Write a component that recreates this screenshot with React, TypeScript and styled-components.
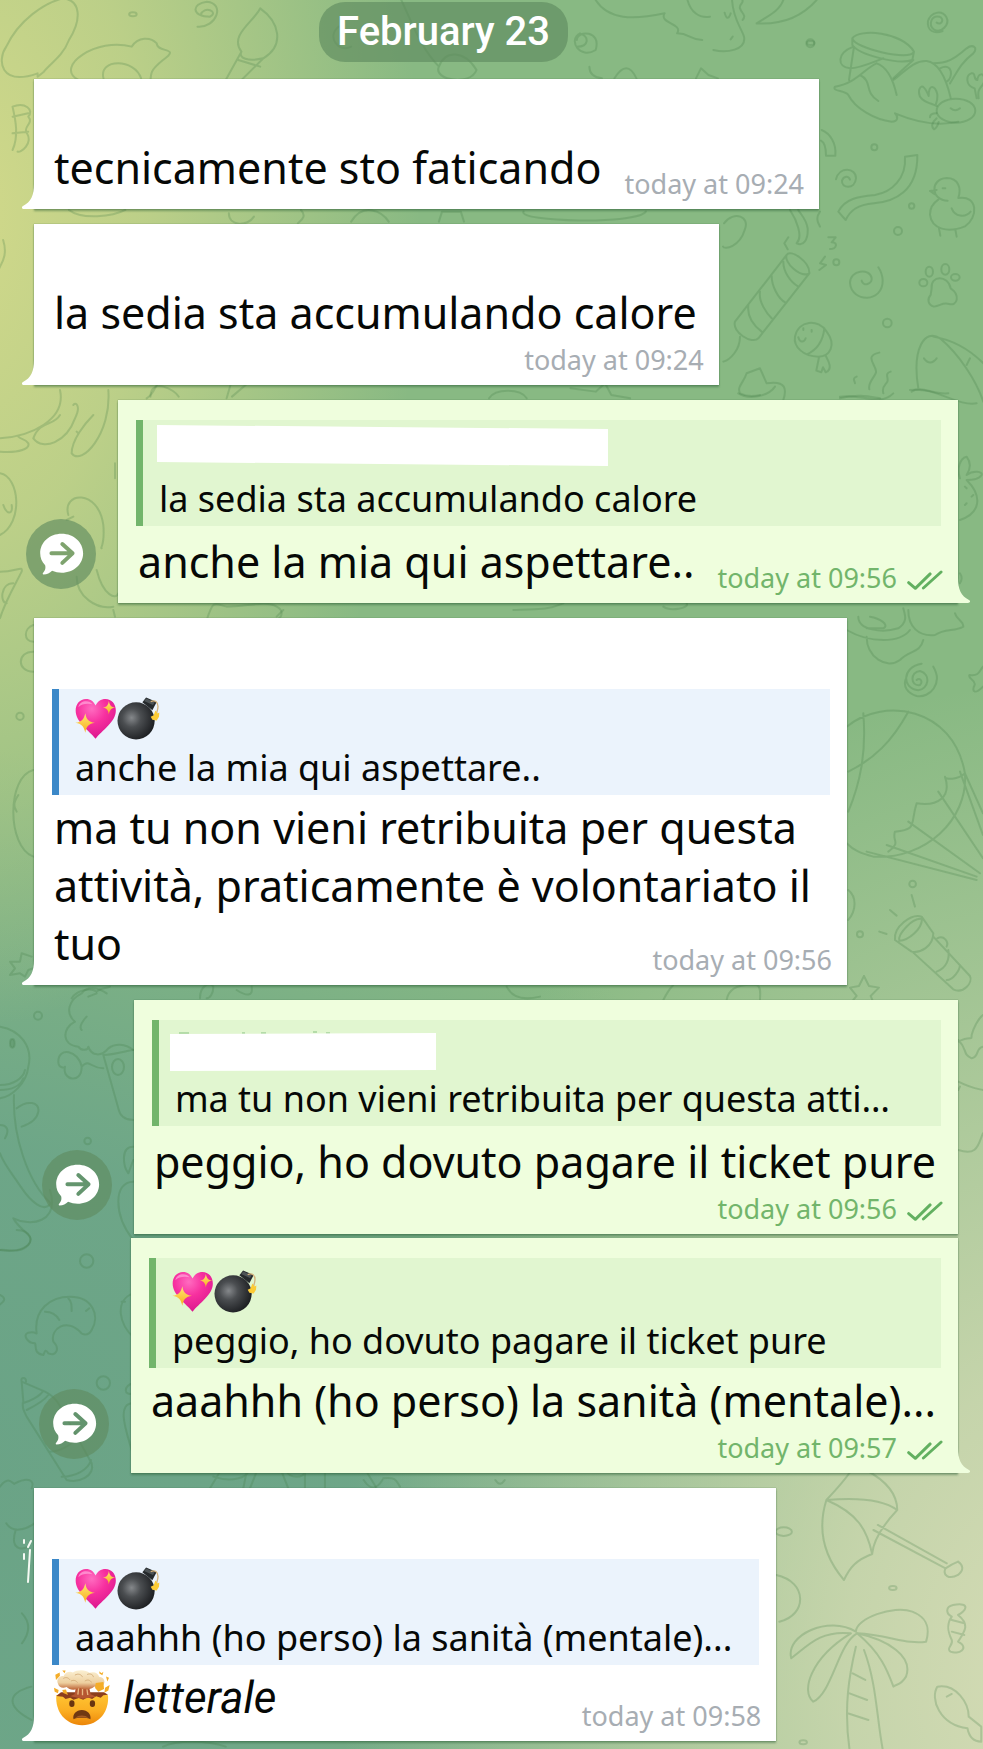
import React from "react";
import styled, { createGlobalStyle, css } from "styled-components";

type Side = "in" | "out";

const GlobalStyle = createGlobalStyle`
  *, *::before, *::after { box-sizing: border-box; }
  body { margin: 0; background: #88b984; }
`;

const Chat = styled.main`
  position: relative;
  isolation: isolate;
  display: flex;
  flex-direction: column;
  min-height: 100vh;
  padding: 2px 0 8px;
  overflow: hidden;
  font-family: "Noto Sans", "Open Sans", sans-serif;
  color: #060806;
  background:
    radial-gradient(ellipse 460px 820px at -4% 12%, #d2d98a 0%, rgba(205, 215, 138, 0.75) 40%, rgba(170, 200, 134, 0) 100%),
    radial-gradient(ellipse 720px 1000px at 108% 96%, #d6dcb6 0%, rgba(208, 217, 178, 0.85) 30%, rgba(170, 200, 150, 0) 100%),
    radial-gradient(ellipse 900px 720px at -6% 84%, #6aa386 0%, rgba(108, 165, 136, 0.95) 45%, rgba(128, 178, 136, 0) 100%),
    #88b983;
`;

const Wallpaper = styled.svg`
  position: absolute;
  inset: 0;
  z-index: -1;
  width: 100%;
  height: 100%;
  fill: none;
  stroke: rgba(62, 122, 66, 0.24);
  stroke-width: 2;
  stroke-linecap: round;
  stroke-linejoin: round;

  path, circle, ellipse { vector-effect: non-scaling-stroke; }
`;

const DayBadge = styled.time`
  align-self: center;
  margin: 0 96px 17px 0;
  padding: 0 18px;
  border-radius: 26px;
  background: rgba(96, 139, 96, 0.66);
  color: #fff;
  font: 500 40px/60px Roboto, sans-serif;
`;

const Messages = styled.ol`
  display: flex;
  flex-direction: column;
  gap: 15px;
  margin: 0;
  padding: 0;
  list-style: none;
`;

const Row = styled.li<{ $side: Side; $grouped?: boolean }>`
  display: flex;
  align-items: flex-end;
  gap: 22px;
  ${({ $side }) =>
    $side === "in"
      ? css`justify-content: flex-start; padding: 0 136px 0 34px;`
      : css`justify-content: flex-end; padding: 0 25px 0 0;`}
  ${({ $grouped }) => $grouped && css`margin-top: -11px;`}
`;

const Bubble = styled.article<{ $side: Side }>`
  position: relative;
  display: flex;
  flex-direction: column;
  min-width: 0;
  padding: 0 17px 9px 18px;
  background: ${({ $side }) => ($side === "in" ? "#fff" : "#effedd")};
  box-shadow: 0 0 1px rgba(40, 90, 50, 0.6), 0 2px 2px rgba(40, 90, 50, 0.45);
`;

const Tail = styled.svg<{ $side: Side }>`
  position: absolute;
  bottom: 0;
  width: 14px;
  height: 30px;
  ${({ $side }) =>
    $side === "in"
      ? css`left: -12px; fill: #fff;`
      : css`right: -12px; fill: #effedd; transform: scaleX(-1);`}
`;

const SenderSpace = styled.div`
  height: 58px;
`;

const Quote = styled.blockquote<{ $side: Side; $tall?: boolean; $snug?: boolean }>`
  margin: 0;
  padding: 0 27px 5px 16px;
  border-left: 7px solid ${({ $side }) => ($side === "in" ? "#3b88c8" : "#72b56b")};
  background: ${({ $side }) => ($side === "in" ? "#ebf3fc" : "#e1f6d0")};
  margin-top: ${({ $side }) => ($side === "in" ? 13 : 20)}px;
  margin-bottom: ${({ $snug }) => ($snug ? 2 : 5)}px;
  ${({ $tall }) => $tall && css`padding-top: 4px;`}
`;

const Author = styled.div`
  display: flex;
  align-items: flex-start;
  height: 57px;
`;

const Emojis = styled.svg`
  width: 85px;
  height: 43px;
  margin-top: 8px;
`;

const Cover = styled.svg`
  height: 55px;
  margin-left: -16px;
  overflow: visible;
`;

const QuoteText = styled.p`
  margin: 0;
  font-size: 36px;
  line-height: 44px;
  white-space: nowrap;
`;

const Content = styled.div<{ $stacked?: boolean }>`
  display: flex;
  justify-content: space-between;
  align-items: flex-end;
  column-gap: 18px;
  ${({ $stacked }) => $stacked && css`flex-direction: column; row-gap: 2px;`}
`;

const Body = styled.p<{ $stacked?: boolean }>`
  align-self: ${({ $stacked }) => ($stacked ? "flex-start" : "auto")};
  margin: 2px 5px ${({ $stacked }) => ($stacked ? 0 : 3)}px 2px;
  font-size: 43px;
  line-height: 58px;
`;

const LongBody = styled(Body)`
  margin-right: -180px;
`;

const EmojiBody = styled(Body)`
  display: flex;
  align-items: center;
  gap: 12px;
  padding-bottom: 2px;
`;

const MindBlown = styled.svg`
  width: 57px;
  height: 56px;
`;

const Slanted = styled.em`
  font-family: Roboto, sans-serif;
  font-size: 44px;
  line-height: 58px;
`;

const Meta = styled.footer<{ $side: Side }>`
  display: flex;
  align-items: center;
  gap: 10px;
  flex-shrink: 0;
  margin-right: -2px;
  color: ${({ $side }) => ($side === "in" ? "#a7adb3" : "#72b56b")};
  font-size: 27px;
  line-height: 32px;
  white-space: nowrap;
`;

const Checks = styled.svg`
  width: 36px;
  height: 22px;
  margin-top: 4px;
  fill: none;
  stroke: #62b060;
  stroke-width: 9;
  stroke-linecap: round;
  stroke-linejoin: round;
`;

const ForwardButton = styled.button`
  flex-shrink: 0;
  width: 70px;
  height: 70px;
  margin: 0 0 14px;
  padding: 0;
  border: 0;
  border-radius: 50%;
  background: rgba(96, 139, 96, 0.64);
`;

const ForwardGlyph = styled.svg`
  display: block;
  width: 70px;
  height: 70px;
`;

function HeartAndBomb() {
  return (
    <Emojis viewBox="228 262 256 128" role="img" aria-label="💖💣">
      <defs>
        <radialGradient id="heart" cx="40%" cy="25%" r="80%">
          <stop offset="0" stopColor="#ff6cc0" />
          <stop offset=".45" stopColor="#f7309f" />
          <stop offset="1" stopColor="#d8148c" />
        </radialGradient>
        <radialGradient id="ball" cx="38%" cy="42%" r="62%">
          <stop offset="0" stopColor="#85888b" />
          <stop offset=".4" stopColor="#4b4e51" />
          <stop offset="1" stopColor="#1e2023" />
        </radialGradient>
        <linearGradient id="spark" x1="0" y1="0" x2="0" y2="1">
          <stop offset="0" stopColor="#ffe873" />
          <stop offset="1" stopColor="#f8ad1c" />
        </linearGradient>
      </defs>
      <path d="M290 387C270 362 230 337 230 302c0-20 13-35 31-35 14 0 24 8 29 20 5-12 16-20 30-20 18 0 31 15 31 35 0 35-42 60-61 85z" fill="url(#heart)" />
      <path d="M238 292c3-12 12-18 23-18 8 0 15 4 20 9-14-3-31-3-43 9z" fill="#ff9bd6" opacity=".8" />
      <path d="M259 310c3 18 10 26 29 29-19 3-26 11-29 30-4-19-11-27-30-30 19-3 26-11 30-29z" fill="url(#spark)" />
      <path d="M330 273c2 13 7 18 19 20-12 2-17 7-19 21-2-14-7-19-18-21 11-2 16-7 18-20z" fill="url(#spark)" />
      <path d="M431 277l11-14 32 13-13 25z" fill="#25292c" />
      <path d="M436 273l7-7 25 11-5 8z" fill="#4d5356" />
      <circle cx="412" cy="333" r="56" fill="url(#ball)" />
      <path d="M456 275c14-6 22 2 22 15 0 8-3 15-5 22" fill="none" stroke="#d4b27c" strokeWidth="4" />
      <path d="M470 302l7 9 5-3-1 13-7 11-13-2-5-9 9-5z" fill="#fccb36" />
    </Emojis>
  );
}

function ExplodingHead() {
  return (
    <MindBlown viewBox="165 452 172 168" role="img" aria-label="🤯">
      <defs>
        <linearGradient id="face" x1="0" y1="0" x2="0" y2="1">
          <stop offset="0" stopColor="#ffc634" />
          <stop offset=".55" stopColor="#fbae22" />
          <stop offset="1" stopColor="#ec8609" />
        </linearGradient>
        <linearGradient id="cloud" x1="0" y1="0" x2="0" y2="1">
          <stop offset="0" stopColor="#fbf0d2" />
          <stop offset=".65" stopColor="#edcf9f" />
          <stop offset="1" stopColor="#bd6335" />
        </linearGradient>
      </defs>
      <path d="M172 528c-4 48 26 90 78 90s82-42 78-90c-22-8-132-8-156 0z" fill="url(#face)" />
      <path d="M172 530l20 2 8 7 14-4 10 6 16-5 13 5 13-7 14 5 12-8 14 4 8-7 14-2-12-7H186z" fill="#8c3e1c" />
      <path d="M233 496h36l7 29 16 7-40 6-38-7 13-6z" fill="#b65731" />
      <path d="M240 500l-3 26m14-26v28m12-28l4 27" stroke="#e9b983" strokeWidth="4" />
      <path d="M177 493c-7-15 7-24 17-23 4-12 19-16 28-11 13-9 39-9 50 1 15-5 27 2 29 12 13 1 21 13 13 24-8 10-20 7-27 5-15 13-36 10-44 4-14 9-32 7-40-2-12 5-23 1-26-10z" fill="url(#cloud)" />
      <path d="M193 477c8-5 16-2 20 4m15-14c10-6 20-2 23 6m14-8c9-4 18 0 19 8m-68 12c8-5 17-1 20 5m22-5c8-6 17-3 20 4" fill="none" stroke="#d6b07e" strokeWidth="3" />
      <g fill="#f4ad28">
        <path d="M169 466l13-7 1 10-12 13zM190 453l10 0-3 8zM302 455l6 6 6-4-3 10-9-5zM165 505l14 7-2 10-10-5zM322 471l9 4-5 11zM291 491l23-3 2 21-17 8-10-11zM319 505l14-8-4 16-12 7z" />
        <path d="M190 512l11-2 6 17-14-6z" />
      </g>
      <ellipse cx="219" cy="553" rx="8" ry="10" fill="#6a3510" />
      <ellipse cx="281" cy="553" rx="8" ry="10" fill="#6a3510" />
      <path d="M224 600c-4-15 8-28 25-28s29 13 26 28c-10-5-40-6-51 0z" fill="#713812" />
      <path d="M230 596c6-10 32-10 38 0-10-3-28-3-38 0z" fill="#a65b25" />
    </MindBlown>
  );
}

function Forward() {
  return (
    <ForwardButton type="button" aria-label="Forward">
      <ForwardGlyph viewBox="70 387 212 212" fill="#fff" aria-hidden="true">
        <mask id="arrow">
          <path d="M60 380h230v230H60z" />
          <path d="M147 491h62M180 463l31 28-31 29" fill="none" stroke="#000" strokeWidth="12" strokeLinecap="round" strokeLinejoin="round" />
        </mask>
        <g mask="url(#arrow)">
          <path d="M178 432c37 0 65 26 65 59s-28 59-65 59c-10 0-20-2-29-6-7 7-15 11-26 11-3 0-3-3-1-5 7-8 8-16 6-23-10-10-15-22-15-36 0-33 28-59 65-59z" />
        </g>
      </ForwardGlyph>
    </ForwardButton>
  );
}

function BubbleTail({ side }: { side: Side }) {
  return (
    <Tail $side={side} viewBox="0 0 14 30" aria-hidden="true">
      <path d="M12 5C12 16 9 23 1 27C-1 28 0 30 2 30H14V5z" />
    </Tail>
  );
}

function Time({ side, children }: { side: Side; children: string }) {
  return (
    <Meta $side={side}>
      <time>{children}</time>
      {side === "out" && (
        <Checks viewBox="1281 532 112 66" role="img" aria-label="Read">
          <path d="M1286 573l21 18 46-45M1332 590l55-50" />
        </Checks>
      )}
    </Meta>
  );
}

function Doodles() {
  return (
    <Wallpaper viewBox="0 0 983 1749" preserveAspectRatio="xMidYMin slice" aria-hidden="true">
      {/* upper right: drum, crab, duckling, party popper, paw */}
      <g transform="translate(720 0) scale(.3333)">
        <path d="M-100 -10C-90 40-60 55-30 50M-20 150C20 160 80 150 72 110C65 85 40 60 36 0M14 38q8 30 18 2M32 118l6-8M60 -10c20 20-5 20 0 35s20 20 8 35" />
        <path d="M110 70C150 45 180 30 190 0M110 70C190 75 250 45 290 0" />
        <circle cx="271" cy="130" r="12" />
        <path d="M650 68c15 10 25-12 8-18-25-5-33 25-17 38 22 15 50-15 38-37-14-22-46-15-55 12-4 30 20 40 44 30" />
        <path d="M397 115c20-30 150-20 185 40-10 30-180-10-185-40zM397 115v20c20 30 140 60 180 45l5-25M402 140l-15 100M400 140c-50 20-50 60-10 65 30 0 60-15 100-30M520 235l60-55" />
        <path d="M470 190c-30 10-60 60-125 70-10 15 30 10 40 25 20 40 80 75 130 80 20 0 20-15 10-25 60 25 130 40 190 25M470 190c30 10 50 50 60 95M420 225c40 20 10 50 55 78M520 240c30-20 60-60 100-57 40 5 60 60 72 110M640 190c40 0 60-10 100-45 20-15 35 0 20 15-40 30-50 60-70 90M660 205c40-20 40 30 20 40" />
        <ellipse cx="708" cy="332" rx="58" ry="36" />
        <path d="M692 325q14 12 28 0M650 318c-20-10-60-15-52-50 8-20 20 0 28 20 0-40 20-30 26-5 2 30-10 30-2 35M770 295l-6-30c-30-10-25-40-10-45 15-3 5 20 18 20 3-20 20-25 22 0-5 25-24 20-18 55M650 340q-20 0-20 12M650 355q-22 20-8 33 10-5 14-22" />
        <circle cx="463" cy="442" r="9" /><circle cx="575" cy="618" r="8" /><circle cx="534" cy="693" r="12" /><circle cx="349" cy="787" r="9" /><circle cx="502" cy="969" r="13" />
        <path d="M305 390c25 10 45 40 41 77h-28c0-25-5-40-15-45M348 538c10-40 60-35 60-3-3 35-45 30-42 7 5-15 20-15 24-3" />
        <path d="M555 470l37-5c2 110-70 140-130 145-50 5-70 20-85 50l-22-25c20-40 60-45 110-50 50-8 95-50 90-115z" />
        <path d="M683 602c-50 0-55-65-3-68 35 0 45 30 35 60 60-10 60 60 20 85-50 20-100 10-105-35 0-20 10-35 25-45M650 570l-20 3 15 10M695 625c10 25 40 30 57 10M657 685l4 22M706 688l4 22M668 565h8" />
        <path d="M45 965L200 765c10-20 70 20 68 55L115 1015c-20 20-80-20-70-50zM200 765c-10 20 40 70 68 55M190 785c0 30 20 60 45 75M155 828c0 30 20 70 42 80M120 875c-5 30 20 65 35 80M85 915c-5 40 20 65 40 80M60 1010c0 40-30 70-50 75" />
        <path d="M325 712l22 0-12 15c20 0 15 20-5 20M315 770l-15 20 18 5-20 15M205 712l-12 18 10 18M210 630c20 30 40 80 20 100 20 10 35-10 33-45-5-30-20-40-28-55" />
        <path d="M425 842c5 20 32 10 30-8-5-30-65-25-65 15 5 60 100 60 98-8-1-20-7-30-13-39" />
        <path d="M635 865c-5-40 50-40 57 0 30 20 20 55-5 47-20-5-25 5-45 8-20-5-20-25-10-35z" />
        <ellipse cx="628" cy="815" rx="11" ry="15" /><ellipse cx="676" cy="808" rx="12" ry="16" /><ellipse cx="706" cy="832" rx="13" ry="10" /><ellipse cx="610" cy="848" rx="12" ry="11" />
        <path d="M225 1010c10-50 70-55 95-15 30 40 10 75-25 75-45 0-75-30-70-60zM313 985c-5 50-35 70-52 78M297 1072l-8 40 15 5 5-15 8 15c25-10 5-40 0-50M235 1012c5 18 18 15 22 3M250 985v5M275 990v5" />
        <path d="M595 1165c-20-120 20-180 65-150 60 50 110 130 130 190M640 1010c60 10 110 40 150 80M612 1075q18 25 38 0M575 1175c30-20 60 10 110 5M750 1075l-10 20" />
        <path d="M478 1058c-50 10-5 40-10 60-5 15-25 30-20 50M512 1115c-20 5-5 20-10 30s-18 15-12 35M410 1130c-15 5-5 15-5 20M80 1120l40-15 20 45c60-10 60 20 50 50M80 1120c-10 30-30 40-20 60 20 10 40 10 60 5M360 1195c50-15 90-5 120 0" />
        <path d="M12 670c30-40 80-20 62 20-15 50-60 60-65 50M300 635c-15 20-5 35 0 45" />
      </g>
      {/* top left: balloon, pup, brush */}
      <g transform="scale(.627 .3333)">
        <path d="M60 220C0 260-5 180 10 140 30 60 70 10 100-5 130 0 130 60 110 120 100 170 80 190 70 215l-10 15zM125 240c-40-40 30-130 85-100 10-30 30-30 40-10 0 30 40 10 10 50-20 30-20 40-20 70M165 235c-8-60 50-60 60 0" />
        <path d="M385 155c-20-50 20-90 30-130 30 40 40 110 5 150-25 10-40 0-35-20zM385 155l-25 85M420 175l-40 75M380 180l35 20M320 45c5-30 30-10 15 5-30 0-30-40-5-45 30 5 15 80-15 75" />
        <circle cx="212" cy="43" r="6" /><circle cx="1293" cy="129" r="6" />
        <path d="M640 0c20 80 30 140 60 200-10 40 50 60 60 10-20-60-50-60-60-10M540 80c-20 30 0 80 20 60M920 140c20 0 20-30 5-40-20 20 0 80 25 50 10-60-30-60-30-30" />
        <path d="M950 0c20 60 60 60 110 40M1060 40c-10 30 30 30 20 60 20 0 20 20 40 20M980 235q20-60 35 0M1110 235l8-30 12 20 15 10" />
        <path d="M20 320c20-15 35 10 25 30 10 20-10 30-2 50 10 30-10 60-15 55M20 320c5 40 10 90 0 130M20 350l25-10M20 400l25-5" />
        <path d="M110 630c20 30 70 20 90 0M365 640c0 40 30 40 40 10M480 630c10 20 0 30-5 40M560 665c20-60 50-30 60 0M700 665l5-30h30l5 30M835 635c-10 30 180 40 195 0M940 200q0 30 20 35" />
        <path d="M5 720c10 60-10 80-8 100M240 1190c0-60 40-20 45 0M370 1190l25-40 40 0 10-10M780 1195c10-30 50-30 60 0M910 1165l40 10 15-25 10 35 30 10" />
      </g>
      {/* left: bunny ears and petals */}
      <g transform="translate(0 390) scale(.3333)">
        <path d="M0 145C90 140 200 90 180 0M0 185c60 5 90-10 85-25-10-15-20-10-30-20M100 145C120 90 160 110 180 75M100 145c30 40 100 10 125-60 20-40 0-50-5-40M215 190c0-40 40-90 65-115M215 190c30 40 120-60 110-190M230 125l5 5M0 250c60 10 70 150 0 185M10 345c10 30 30 30 25 0" />
        <path d="M205 375c-20-70 90-80 105 30 5 60-10 70-5 70M200 390l20-10M290 540c20 80 60 90 65 70M230 560c0 60 60 100 110 90M0 545c50 0 70-20 65 0-20 40-50 90-65 140M40 580c-40 0-40 60-20 60M440 25c30-20 20-40 50-60M680 25l20-70M345 220v45M620 690c20-60 20-50 60-40 60 0 120-20 150 0 20 10 20 30 0 40" />
      </g>
      <g transform="translate(480 390) scale(.3333)">
        <path d="M1440 265c-10-30 0-60 20-65 15 20 10 40 0 55 20-15 50-10 45 0-10 15-30 15-45 15 50 50 40 100-20 120M1455 290l5 5M1475 320l5-5M1455 345l5-5M775 10c30 20 90 10 110-20M1080 20c60-10 120 30 160-10M1290 0c80-10 140 50 200 40M1440 550q10 15 0 30M100 660c60-5 90 5 150-20M550 650c20 15 80 5 70-10" />
      </g>
      {/* right: rose, hot-air balloon, torch */}
      <g transform="translate(500 610) scale(.3333)">
        <path d="M1040 60c70 40 160 40 190 0M1075 20c0 40 70 50 120 35 30-20 20-40 15-60M1100 55h50c20-10-10-30-40-35M1225 0c0 50 30 80 80 75 30-20 60-10 85-25 0-20-20-20-25-40M1100 80c0 60 60 100 100 70 30-30 60-20 70-60" />
        <path d="M1250 210c10-10 20 5 10 15-30 5-30-40 0-42 35 10 25 55-5 58-50-5-50-70 10-80M1300 170c30 50-10 95-50 88-30-10-40-30-33-50M1449 170c-10 10-10 30-40 25-8 10 20 15 15 30-10 20 0 30 25 5" />
        <path d="M1040 350c110-90 320-60 355 140 10 140-120 260-275 250-40-10-60-20-80-40M1090 310c10 120-10 210-45 295M1225 305c-50 90-100 140-180 180M1395 490c-20 20-60 20-60 10 20 60-20 90-85 80-20 60 5 80-65 85-10 30 20 30-20 60M1380 485l69 190M1395 490l54 120M1315 545l134 200M1225 635l215 155M1160 705l270 95M1100 725l330 85" />
        <circle cx="1238" cy="822" r="10" /><circle cx="1080" cy="973" r="9" />
        <path d="M1235 855l10 35M1170 900l20 17M1138 965l22 7M1185 990c-5-40 50-80 80-70l35 50c0 40-40 60-65 55zM1198 992c-5-20 40-70 68-65 0 30-40 65-68 65M1240 1028l120 110c30 15 60-20 50-40L1300 980M1312 985c20-10 35 10 28 25M1310 1085c30-10 40-40 35-65M1340 1110c20 0 40-30 40-45" />
        <path d="M1092 1098l15 30 30 5-25 25 5 12M1092 1098l-15 30-27 5 20 25-10 12M1045 840c25 20 25 60 0 90M20 1130c20 40 60 40 100 30M490 1170c10-20 20-35 30-45M680 1170c5-30 30-50 90-45 15 5 10 30 10 45" />
      </g>
      <g transform="translate(0 610) scale(.3333)">
        <circle cx="60" cy="319" r="11" />
        <path d="M100 45c-30 10-30 50 0 50M100 125c-50 0-50 60 0 60M100 480c-80 20-80 230 0 260M55 555c-20 30-10 40-5 50M95 1040l-30-10-5 25-30 0 15 20-15 20 30-5 15 10 10-20 15-5M215 1165c20-30 60-30 75-20 10-10 30-10 40-15M600 1165c0-40 30-50 40-35 0 20-10 35-20 35M710 1140c30 20 50 20 45-10M340 0l5 20M850 0l-20 20" />
      </g>
      {/* left: dinosaur and popcorn */}
      <g transform="translate(0 990) scale(.3333)">
        <path d="M0 110c60 10 100 60 85 120-5 50-50 90-85 95M0 285c40 0 70-20 75-45M0 300c30 0 60-10 70-35M42 315c-5 120 40 260 110 325-20 30-60-5-90-50S10 520 0 490M50 355c30-25 70-20 65 10-5 30-35 40-50 45M0 405c20 0 30 15 15 40M150 600c30 100-60 110-110 85 20 40 70 50 45 80-30 30-60 10-85 15" />
        <ellipse cx="37" cy="160" rx="7" ry="13" fill="rgba(62,122,66,.24)" />
        <circle cx="114" cy="77" r="12" /><circle cx="263" cy="453" r="10" />
        <path d="M320 10c-30-20-60-20-75 0-40 20-50 60-20 85-40 20-40 70 10 75 10 15 30 10 30 0 10 30 40 30 60 5 20-15 50-15 75 5M245 120c-10-10 5-30 15-40M265 20l25-10" />
        <path d="M310 195l45 160c5 25 20 35 45 35M310 195c30 0 80-15 90-15M310 235c-40 0-40-30-65-5-10-50-70-60-70-15 0 20 20 20 20 15-10 40 50 55 50 0" />
        <ellipse cx="354" cy="231" rx="18" ry="24" />
        <path d="M400 470c-40 0-30 60-15 80l15-40M400 575c-60 0-60 100 0 175" />
      </g>
      <g transform="translate(500 990) scale(.3333)">
        <path d="M1375 155c40-20 40 0 40-20 5-20 20-50 34-60M1375 150c30 30 10 40 40 55 25-5 10-30 34-35M1375 275c40 20 50 20 74 25M1375 480c60 20 60-20 74-50M1380 290l-5 10" />
      </g>
      {/* left: shrimp and crayon */}
      <g transform="translate(0 1230) scale(.3333)">
        <circle cx="260" cy="93" r="20" /><circle cx="310" cy="459" r="20" />
        <path d="M0 60c50 10 100-10 90-40-10-20-30-20-40-20M0 195q25 12 0 28M110 310c-10-70 40-110 100-110 70 0 90 60 65 100-10 20-30 15-35 5-40-40-90-10-80 30 20 20 10 45-15 35-10-15-10-5-15 5-30-5-20-25-25-35-20 0-40-25-20-32 20-5 25 5 25 2zM135 245c20 0 35 10 43 25M205 205c10 10 10 20 10 38M268 235l-10 8" />
        <path d="M65 455l70 30c20 10 30 20 40 35L275 700c10 40-40 60-75 50L80 560c-10-20-15-30-10-45zM65 455c-5-15 15-15 13 0M68 520c20-5 50-20 60-35M80 540c20-10 50-25 65-45M185 740c40 0 80-20 88-50M150 665c30 0 60-20 70-30" />
        <path d="M400 190c-60 20-40 100 0 130M365 215h10M400 460c-30 5-30 40 0 30M400 520c-60 0-10 110 0 160M0 770c30-40 40 0 45-10 40-20 60-10 50 15M640 740c60 20 100 0 105-15M660 725l-30 50M740 725l-10 50M770 725l-20 50M845 725l20 50M860 725c10 20 50 20 55 0v50M975 725v50M1100 725l30 50M1150 745c40-5 40 10 50 25" />
      </g>
      {/* lower right: umbrella, palm, candy, fish */}
      <g transform="translate(0 1480) scale(.627 .3333)">
        <path d="M1318 60c20-40 30-60 40-90M1318 60c-20 120 10 200 28 240 10-40 20-60 45-78M1318 60c60-10 95 5 113 30M1431 90c-20 40-38 90-40 132M1318 60c50 40 65 90 73 162M1431 90c0-50-20-90-50-120M1400 135l110 115M1393 150l115 115c-5 20 5 35 20 20 10-15 8-30 0-40M1508 265c8-10 12-14 20-20" />
        <path d="M1365 455c0-40 60-80 90-60 20 15 30 40 22 90-30 10-60-20-110-25 50 20 90 70 78 130-10 30-15 20-20 30-10-50-20-100-58-160-30 30-40 180-70 205-20-30-5-130 60-205-50-10-70 40-95 75-10-70 60-130 103-80zM1365 500c-10 80-20 180-10 310M1378 510c20 100 20 200 30 300M1360 580l20 20M1355 640l28 20M1352 700l33 20" />
        <path d="M1520 375c30-10 20 20 8 30 20 30 10 50 0 80 20 20 0 40-12 30-8-10 5-20 2-35-8-30-8-50 0-70-10-10-10-30 2-35zM1518 420l20 10M1518 455l20 10" />
        <path d="M1495 620c30-10 50 50 50 90l20 30v45c-15 0-20-20-22-40-45-10-60-90-48-125zM1510 650l8-8" />
        <circle cx="1424" cy="324" r="6" /><circle cx="1281" cy="787" r="6" /><circle cx="1250" cy="155" r="13" />
        <path d="M1238 285c50 20 50 120 5 140M10 130c10 30 30 20 45 0M25 150c-10 60 10 60 20 50M35 400q20 40 0 90M50 620c-40 20-40 60 0 100M790 0c5 15 10 15 15 0M580 0c10 30 20 30 30 0M260 800c20-20 70-20 100 0" />
      </g>
      <path d="M31 1541l-3 6M30 1550l-2 32M24 1540v3M24 1554v5" stroke="#f6faf4" />
    </Wallpaper>
  );
}

export default function App() {
  return (
    <>
      <GlobalStyle />
      <Chat>
        <Doodles />
        <DayBadge>February 23</DayBadge>
        <Messages>
          <Row $side="in">
            <Bubble $side="in">
              <SenderSpace />
              <Content>
                <Body>tecnicamente sto faticando</Body>
                <Time side="in">today at 09:24</Time>
              </Content>
              <BubbleTail side="in" />
            </Bubble>
          </Row>

          <Row $side="in">
            <Bubble $side="in">
              <SenderSpace />
              <Content $stacked>
                <Body $stacked>la sedia sta accumulando calore</Body>
                <Time side="in">today at 09:24</Time>
              </Content>
              <BubbleTail side="in" />
            </Bubble>
          </Row>

          <Row $side="out">
            <Forward />
            <Bubble $side="out">
              <Quote $side="out">
                <Author>
                  <Cover width="466" viewBox="0 0 466 55" aria-hidden="true">
                    <path d="M14 5L465 9V46L14 42z" fill="#fff" />
                  </Cover>
                </Author>
                <QuoteText>la sedia sta accumulando calore</QuoteText>
              </Quote>
              <Content>
                <Body>anche la mia qui aspettare..</Body>
                <Time side="out">today at 09:56</Time>
              </Content>
              <BubbleTail side="out" />
            </Bubble>
          </Row>

          <Row $side="in">
            <Bubble $side="in">
              <SenderSpace />
              <Quote $side="in" $snug>
                <Author><HeartAndBomb /></Author>
                <QuoteText>anche la mia qui aspettare..</QuoteText>
              </Quote>
              <Content>
                <LongBody>ma tu non vieni retribuita per questa attività, praticamente è volontariato il tuo</LongBody>
                <Time side="in">today at 09:56</Time>
              </Content>
              <BubbleTail side="in" />
            </Bubble>
          </Row>

          <Row $side="out">
            <Forward />
            <Bubble $side="out">
              <Quote $side="out">
                <Author>
                  <Cover width="280" viewBox="0 0 280 55" aria-hidden="true">
                    <path d="M20 13h10M83 13h3M102 13h5M154 12h4M167 13h4" stroke="#b4dca8" strokeWidth="2" />
                    <path d="M11 14L277 13V50L11 51z" fill="#fff" />
                  </Cover>
                </Author>
                <QuoteText>ma tu non vieni retribuita per questa atti…</QuoteText>
              </Quote>
              <Content $stacked>
                <Body $stacked>peggio, ho dovuto pagare il ticket pure</Body>
                <Time side="out">today at 09:56</Time>
              </Content>
            </Bubble>
          </Row>

          <Row $side="out" $grouped>
            <Forward />
            <Bubble $side="out">
              <Quote $side="out" $tall $snug>
                <Author><HeartAndBomb /></Author>
                <QuoteText>peggio, ho dovuto pagare il ticket pure</QuoteText>
              </Quote>
              <Content $stacked>
                <Body $stacked>aaahhh (ho perso) la sanità (mentale)...</Body>
                <Time side="out">today at 09:57</Time>
              </Content>
              <BubbleTail side="out" />
            </Bubble>
          </Row>

          <Row $side="in">
            <Bubble $side="in">
              <SenderSpace />
              <Quote $side="in" $snug>
                <Author><HeartAndBomb /></Author>
                <QuoteText>aaahhh (ho perso) la sanità (mentale)...</QuoteText>
              </Quote>
              <Content>
                <EmojiBody>
                  <ExplodingHead />
                  <Slanted>letterale</Slanted>
                </EmojiBody>
                <Time side="in">today at 09:58</Time>
              </Content>
              <BubbleTail side="in" />
            </Bubble>
          </Row>
        </Messages>
      </Chat>
    </>
  );
}
